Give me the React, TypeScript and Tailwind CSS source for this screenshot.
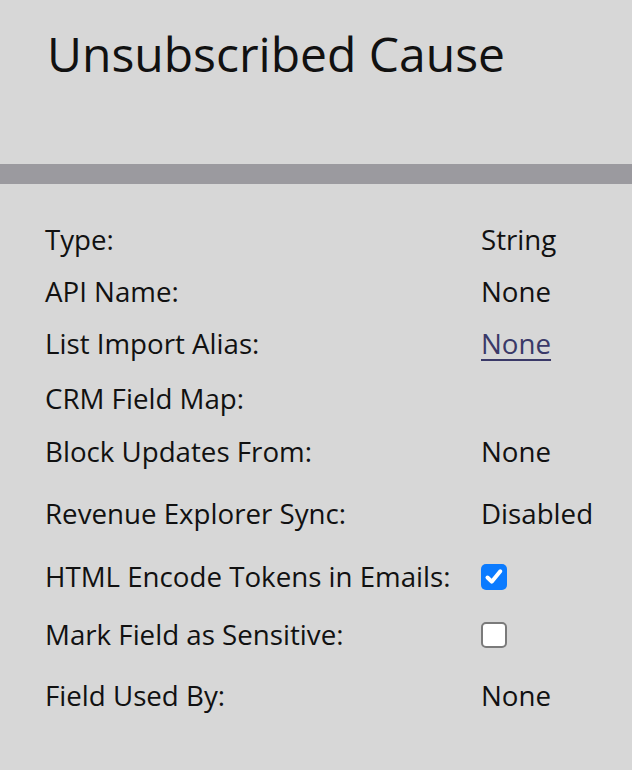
const rows: { label: string; value?: string; kind?: 'text' | 'link' | 'checked' | 'unchecked'; gap: string }[] = [
  { label: 'Type:', value: 'String', gap: 'mt-0' },
  { label: 'API Name:', value: 'None', gap: 'mt-[16px]' },
  { label: 'List Import Alias:', value: 'None', kind: 'link', gap: 'mt-[16px]' },
  { label: 'CRM Field Map:', gap: 'mt-[19px]' },
  { label: 'Block Updates From:', value: 'None', gap: 'mt-[17px]' },
  { label: 'Revenue Explorer Sync:', value: 'Disabled', gap: 'mt-[26px]' },
  { label: 'HTML Encode Tokens in Emails:', kind: 'checked', gap: 'mt-[27px]' },
  { label: 'Mark Field as Sensitive:', kind: 'unchecked', gap: 'mt-[22px]' },
  { label: 'Field Used By:', value: 'None', gap: 'mt-[25px]' },
];

function Value({ row }: { row: (typeof rows)[number] }) {
  if (row.kind === 'checked') {
    return (
      <span className="flex h-[26px] w-[26px] items-center justify-center rounded-[5px] bg-[#0b7bff]">
        <svg width="22" height="22" viewBox="0 0 22 22" fill="none">
          <path d="M4.5 11.5l4.2 4.2 8.6-10.4" stroke="white" strokeWidth="4" strokeLinecap="round" strokeLinejoin="round" />
        </svg>
      </span>
    );
  }
  if (row.kind === 'unchecked') {
    return <span className="block h-[26px] w-[26px] rounded-[5px] border-2 border-[#7a7a7a] bg-white" />;
  }
  if (row.kind === 'link') {
    return <a href="#" className="text-[#3a3968] underline underline-offset-[5px] decoration-[2px]">{row.value}</a>;
  }
  return <span>{row.value}</span>;
}

export default function App() {
  return (
    <div className="min-h-[770px] w-[632px] bg-[#d7d7d7] font-['Open_Sans',sans-serif] text-[#111]">
      <div className="h-[164px] pl-[47px] pt-[24px]">
        <h1 className="text-[48px] leading-[60px] font-normal">Unsubscribed Cause</h1>
      </div>
      <div className="h-[20px] bg-[#9b9a9f]" />
      <div className="pl-[45px] pt-[38px]">
        {rows.map((row) => (
          <div key={row.label} className={`flex h-[36px] items-center text-[27.7px] ${row.gap}`}>
            <span className="w-[436px] shrink-0 whitespace-nowrap">{row.label}</span>
            <Value row={row} />
          </div>
        ))}
      </div>
    </div>
  );
}
